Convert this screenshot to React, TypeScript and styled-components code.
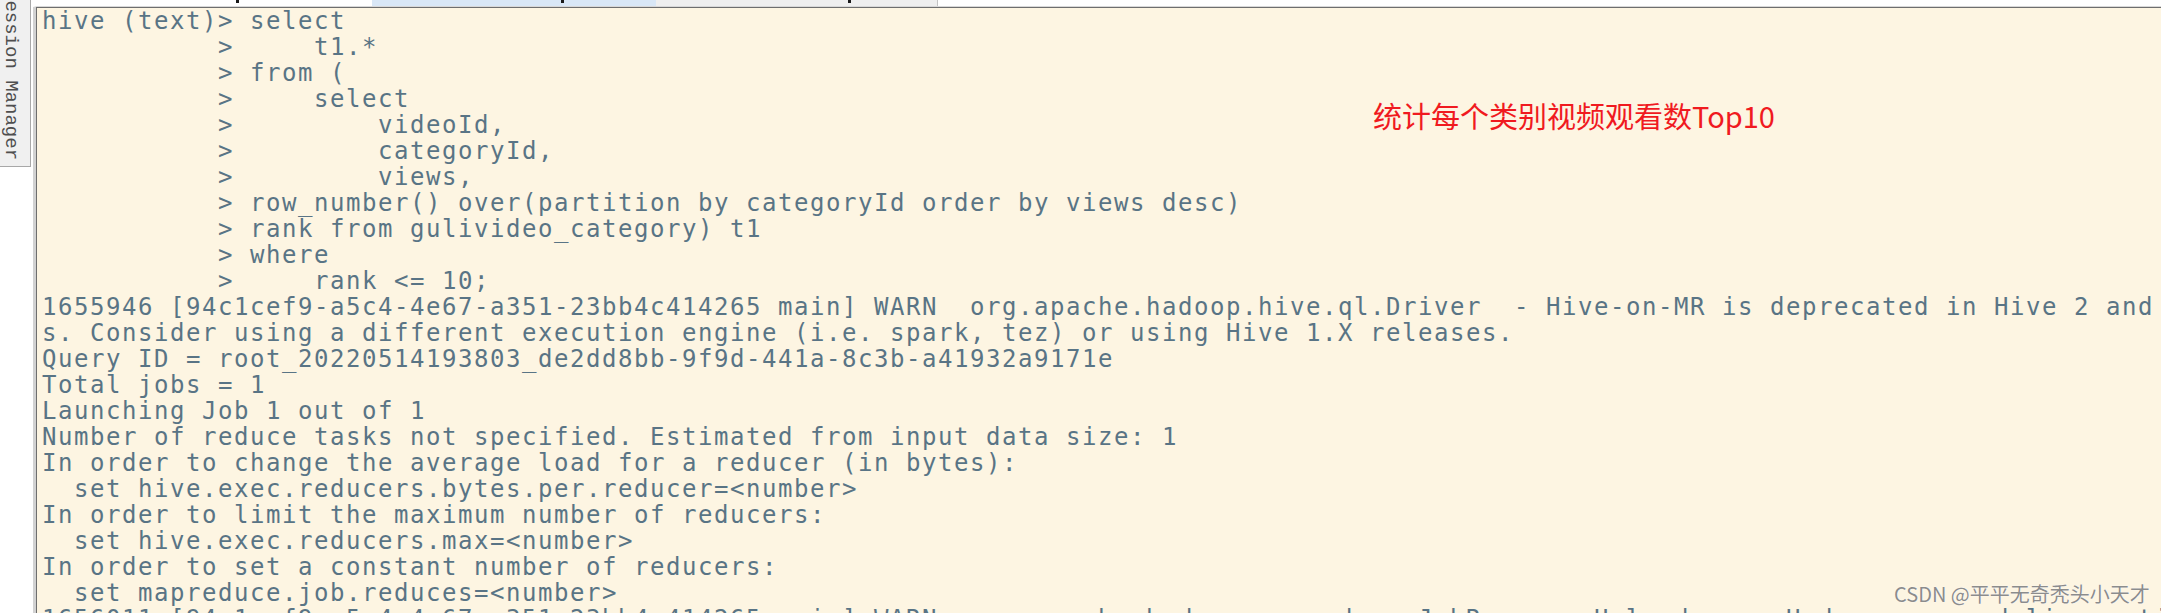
import React from "react";
import styled, { createGlobalStyle } from "styled-components";

const GlobalStyle = createGlobalStyle`
  html, body {
    margin: 0;
    padding: 0;
    background: #ffffff;
    overflow: hidden;
  }
`;

const Window = styled.div`
  display: flex;
  width: 2161px;
  height: 613px;
  overflow: hidden;
  background: #ffffff;
`;

const Sidebar = styled.aside`
  width: 33px;
  flex: 0 0 33px;
  display: flex;
  flex-direction: column;
  background: #ffffff;
`;

const SessionTab = styled.div`
  width: 31px;
  height: 167px;
  box-sizing: border-box;
  background: #f0f0f0;
  border-right: 1px solid #a8a8a8;
  border-bottom: 1px solid #a8a8a8;
  overflow: hidden;
  display: flex;
  justify-content: flex-start;
`;

const TabLabel = styled.span`
  writing-mode: vertical-rl;
  font-family: "Liberation Mono", "DejaVu Sans Mono", monospace;
  font-size: 19px;
  line-height: 19px;
  color: #4e4e4e;
  margin-top: -11.4px;
  margin-left: 1px;
  white-space: nowrap;
`;

const Main = styled.div`
  flex: 1;
  min-width: 0;
  display: flex;
  flex-direction: column;
`;

const TopBar = styled.div`
  height: 6px;
  flex: 0 0 6px;
  display: flex;
  background: #ffffff;
  border-bottom: 1px solid #d8d8d8;
  border-left: 4px solid #ffffff;
  overflow: hidden;
`;

const TopTab = styled.div<{ $bg: string; $w: number; $mark: number; $edge?: boolean }>`
  width: ${(p) => p.$w}px;
  flex: 0 0 ${(p) => p.$w}px;
  box-sizing: border-box;
  background: ${(p) => p.$bg};
  border-right: ${(p) => (p.$edge ? "1px solid #c4c4c4" : "none")};
  padding-left: ${(p) => p.$mark}px;
  display: flex;
  align-items: flex-start;
`;

const Descender = styled.span`
  width: 3px;
  height: 3px;
  background: #1a1a1a;
`;

const Terminal = styled.div`
  position: relative;
  flex: 1;
  min-height: 0;
  background: #fdf5e2;
  border-left: 3px solid #d2d2d2;
  box-shadow: inset 1px 1px 0 #6e6e6e;
  padding: 1px 0 0 6px;
  overflow: hidden;
`;

const Line = styled.div`
  font-family: "DejaVu Sans Mono", "Liberation Mono", monospace;
  font-size: 24px;
  letter-spacing: 1.551px;
  line-height: 26px;
  height: 26px;
  color: #597485;
  white-space: pre;
`;

const Annotation = styled.div`
  position: absolute;
  left: 1337px;
  top: 94px;
  font-family: "Noto Sans CJK SC", "Noto Sans", sans-serif;
  font-size: 29px;
  line-height: 29px;
  color: #f01a1f;
  white-space: nowrap;
`;

const Watermark = styled.div`
  position: absolute;
  left: 1858px;
  top: 577px;
  font-family: "Noto Sans CJK SC", "Noto Sans", sans-serif;
  font-size: 20px;
  line-height: 20px;
  color: #8c8c8c;
  text-shadow: 0 0 1px #ffffff, 0 0 1px #ffffff;
  white-space: nowrap;
`;

const lines = [
  "hive (text)> select",
  "           >     t1.*",
  "           > from (",
  "           >     select",
  "           >         videoId,",
  "           >         categoryId,",
  "           >         views,",
  "           > row_number() over(partition by categoryId order by views desc)",
  "           > rank from gulivideo_category) t1",
  "           > where",
  "           >     rank <= 10;",
  "1655946 [94c1cef9-a5c4-4e67-a351-23bb4c414265 main] WARN  org.apache.hadoop.hive.ql.Driver  - Hive-on-MR is deprecated in Hive 2 and may not be available in the future version",
  "s. Consider using a different execution engine (i.e. spark, tez) or using Hive 1.X releases.",
  "Query ID = root_20220514193803_de2dd8bb-9f9d-441a-8c3b-a41932a9171e",
  "Total jobs = 1",
  "Launching Job 1 out of 1",
  "Number of reduce tasks not specified. Estimated from input data size: 1",
  "In order to change the average load for a reducer (in bytes):",
  "  set hive.exec.reducers.bytes.per.reducer=<number>",
  "In order to limit the maximum number of reducers:",
  "  set hive.exec.reducers.max=<number>",
  "In order to set a constant number of reducers:",
  "  set mapreduce.job.reduces=<number>",
  "1656011 [94c1cef9-a5c4-4e67-a351-23bb4c414265 main] WARN  org.apache.hadoop.mapreduce.JobResourceUploader  - Hadoop command-line option parsing not performed. Implement the Tool interface and execute your application with ToolRunner to remedy this.",
];

export default function App() {
  return (
    <>
      <GlobalStyle />
      <Window>
        <Sidebar>
          <SessionTab>
            <TabLabel>Session Manager</TabLabel>
          </SessionTab>
        </Sidebar>
        <Main>
          <TopBar>
            <TopTab $bg="#ffffff" $w={335} $mark={199}>
              <Descender />
            </TopTab>
            <TopTab $bg="#d9e7f6" $w={284} $mark={189}>
              <Descender />
            </TopTab>
            <TopTab $bg="#efefef" $w={282} $mark={192} $edge>
              <Descender />
            </TopTab>
          </TopBar>
          <Terminal>
            {lines.map((l, i) => (
              <Line key={i}>{l}</Line>
            ))}
            <Annotation>统计每个类别视频观看数Top10</Annotation>
            <Watermark>CSDN @平平无奇秃头小天才</Watermark>
          </Terminal>
        </Main>
      </Window>
    </>
  );
}
